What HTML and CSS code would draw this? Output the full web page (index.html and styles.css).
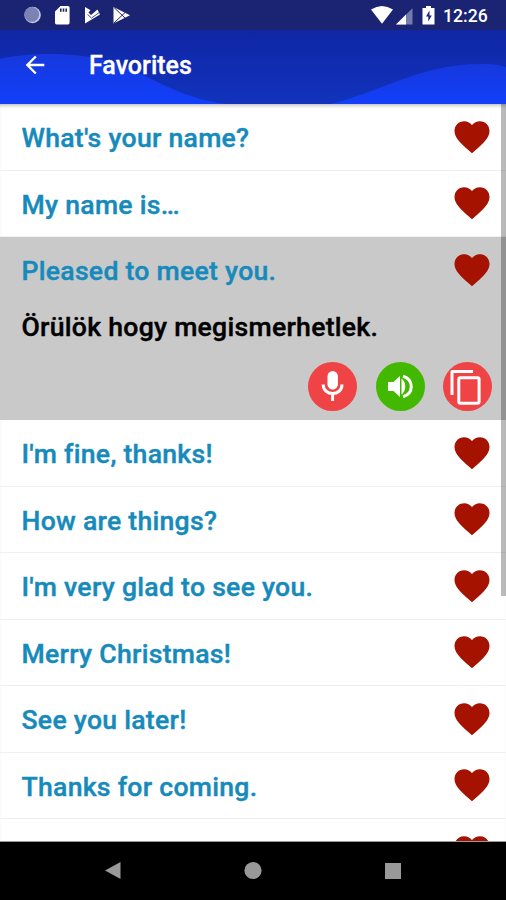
FILE: index.html
```html
<!DOCTYPE html>
<html lang="en">
<head>
<meta charset="utf-8">
<title>Favorites</title>
<link rel="stylesheet" href="styles.css">
</head>
<body>
<svg class="defs" aria-hidden="true">
  <symbol id="heart" viewBox="0 0 24 24"><path d="M12 21.35l-1.45-1.32C5.4 15.36 2 12.28 2 8.5 2 5.42 4.42 3 7.5 3c1.74 0 3.41.81 4.5 2.09C13.09 3.81 14.76 3 16.5 3 19.58 3 22 5.42 22 8.5c0 3.78-3.4 6.86-8.55 11.54L12 21.35z"/></symbol>
</svg>
<div class="screen">
  <div class="status">
    <svg class="status-left" viewBox="0 0 140 30">
      <circle cx="32.6" cy="15" r="8.2" fill="#c5cbe8"/><circle cx="31.8" cy="14.4" r="7.4" fill="#7b83b5"/>
      <path fill="#fff" fill-rule="evenodd" d="M60.500 6H68q1.600 0 1.600 1.600V22.800q0 1.600-1.600 1.600H56.600q-1.600 0-1.600-1.600V11.500zM60 8.500v3.200h1.600V8.500zm2.700 0v3.200h1.600V8.500zm2.700 0v3.200H67V8.500z"/>
      <path fill="#fff" d="M85 7L90.500 10.200 88.500 12.500 91 15 97.500 9.500 100 14.500 85 23.500z"/>
      <path fill="none" stroke="#1a2472" stroke-width=".8" d="M87.500 14.500L91.500 18 99.500 12.300"/>
      <path fill="#fff" d="M113.500 7v16.500l16.500-8.200z"/>
      <path fill="none" stroke="#1a2472" stroke-width="1" d="M114 7.500l11 10.500M114 23l11-10.500"/>
    </svg>
    <svg class="status-right" viewBox="366 0 72 30">
      <path fill="#fff" d="M371 9.600Q382 2.600 393 9.600L382 23.800z"/>
      <path fill="#747bad" d="M412.500 8.200V24.500H396z"/><path fill="#fff" d="M406 14.600V24.500H396z"/>
      <path fill="#fff" d="M426 6h5v2h3.500v16.500h-12V8H426z"/><path fill="#1a237e" d="M429.500 10.500l-3.500 6h2.300v5l3.500-6h-2.300z"/>
    </svg>
    <span class="clock">12:26</span>
  </div>
  <header class="bar">
    <svg class="waves" viewBox="0 0 506 74">
      <defs>
        <linearGradient id="back" x2="0" y2="1"><stop stop-color="#1026a5"/><stop offset="1" stop-color="#1133bd"/></linearGradient>
        <linearGradient id="wave" x2="0" y2="1"><stop stop-color="#1638dd"/><stop offset="1" stop-color="#123ffa"/></linearGradient>
      </defs>
      <path fill="url(#back)" d="M0 0h506v74H0z"/>
      <path fill="url(#wave)" d="M0 29C30 22 75 22 110 31 150 44 175 68 227 74H0z"/>
      <path fill="url(#wave)" d="M330 74C385 61 420 33 485 34q12 0 21 3v37z"/>
    </svg>
    <svg class="back" viewBox="0 0 24 24"><path d="M20 11H7.830l5.590-5.590L12 4l-8 8 8 8 1.410-1.410L7.830 13H20z"/></svg>
    <h1>Favorites</h1>
  </header>
  <main class="list">
    <div class="row"><span>What's your name?</span><svg class="heart"><use href="#heart"/></svg></div>
    <div class="row"><span>My name is…</span><svg class="heart"><use href="#heart"/></svg></div>
    <section class="open">
      <div class="row"><span>Pleased to meet you.</span><svg class="heart"><use href="#heart"/></svg></div>
      <p class="translation">Örülök hogy megismerhetlek.</p>
      <div class="actions">
        <button class="action" aria-label="Record"><svg viewBox="0 0 49 49"><rect x="19.500" y="9" width="10.400" height="18.500" rx="5.200"/><path class="line" d="M15.200 22.500c0 12 18.800 12 18.800 0M24.600 32v7"/></svg></button>
        <button class="action listen" aria-label="Listen"><svg viewBox="0 0 49 49"><path d="M12 20h5.500L24 14v21L17.500 29H12zM25.500 16.500c5 3.500 5 12.500 0 16z"/><path class="line" d="M27 14.200c11 3.300 11 17.300 0 20.600"/></svg></button>
        <button class="action" aria-label="Copy"><svg viewBox="0 0 49 49"><path class="line" stroke-linejoin="round" d="M9 33V9.500H30"/><rect class="line" x="15.800" y="15.800" width="20.300" height="25.400" rx="1.500"/></svg></button>
      </div>
    </section>
    <div class="row"><span>I'm fine, thanks!</span><svg class="heart"><use href="#heart"/></svg></div>
    <div class="row"><span>How are things?</span><svg class="heart"><use href="#heart"/></svg></div>
    <div class="row"><span>I'm very glad to see you.</span><svg class="heart"><use href="#heart"/></svg></div>
    <div class="row"><span>Merry Christmas!</span><svg class="heart"><use href="#heart"/></svg></div>
    <div class="row"><span>See you later!</span><svg class="heart"><use href="#heart"/></svg></div>
    <div class="row"><span>Thanks for coming.</span><svg class="heart"><use href="#heart"/></svg></div>
    <div class="row"><span></span><svg class="heart"><use href="#heart"/></svg></div>
    <i class="scrollbar"></i>
  </main>
  <nav class="nav">
    <svg viewBox="0 0 20 20"><path d="M2 10.500L17.500 2v17z"/></svg>
    <svg viewBox="0 0 20 20"><circle cx="10" cy="10.500" r="8.600"/></svg>
    <svg viewBox="0 0 20 20"><path d="M2 3h16v16H2z"/></svg>
  </nav>
</div>
</body>
</html>
```
FILE: styles.css
```css
* { box-sizing: border-box; }
body { margin: 0; font-family: Roboto, "Liberation Sans", sans-serif; }
.defs { position: absolute; width: 0; height: 0; }
.screen { width: 506px; height: 900px; display: flex; flex-direction: column; overflow: hidden; background: #fff; }
.status { flex: none; height: 30px; display: flex; align-items: center; background: #1a2472; color: #fff; }
.status-left { width: 140px; height: 30px; }
.status-right { width: 72px; height: 30px; margin-left: auto; }
.clock { width: 68px; padding: 2px 0 0 5px; font-size: 17.6px; font-weight: 500; line-height: 28px; }
.bar { flex: none; position: relative; height: 74px; display: flex; align-items: center; padding-left: 21px; }
.waves { position: absolute; inset: 0; width: 506px; height: 74px; }
.back { position: relative; width: 28px; height: 28px; margin-top: -5px; fill: #fff; }
.bar h1 { position: relative; margin: -2px 0 0 40px; font-size: 25px; font-weight: 500; line-height: 30px; color: #fff; -webkit-text-stroke: .3px; }
.list { flex: 1; min-height: 0; position: relative; overflow: hidden; border-bottom: 1px solid #999; box-shadow: inset 0 4px 4px -3px #aaa; }
.row { height: 66.5px; padding: 0 13px 0 21.5px; display: flex; align-items: center; justify-content: space-between; border-bottom: 1.5px solid #f0f0f0; color: #168abb; white-space: nowrap; }
.row, .translation { font-size: 26.6px; font-weight: 500; letter-spacing: .27px; -webkit-text-stroke: .4px; }
.row span { padding-top: 2px; }
.heart { width: 42px; height: 42px; fill: #a51200; }
.open { height: 183px; background: #c9c9c9; }
.open .row { border: 0; }
.open .row span { padding-top: 1px; }
.translation { margin: 7px 0 0 21.5px; line-height: 32px; color: #000; }
.actions { display: flex; justify-content: flex-end; gap: 18.5px; padding: 19px 14px 0 0; }
.action { width: 49px; height: 49px; padding: 0; border: 0; border-radius: 50%; background: #ef4345; }
.action svg { display: block; width: 49px; height: 49px; fill: #fff; }
.action .line { fill: none; stroke: #fff; stroke-width: 3; }
.listen { background: #43b800; }
.scrollbar { position: absolute; top: 0; right: 0; width: 5px; height: 492px; background: rgba(0, 0, 0, .27); }
.nav { flex: none; height: 58px; display: flex; justify-content: center; gap: 120px; padding-top: 18px; background: #000; }
.nav svg { width: 20px; height: 20px; fill: #999; }
```
